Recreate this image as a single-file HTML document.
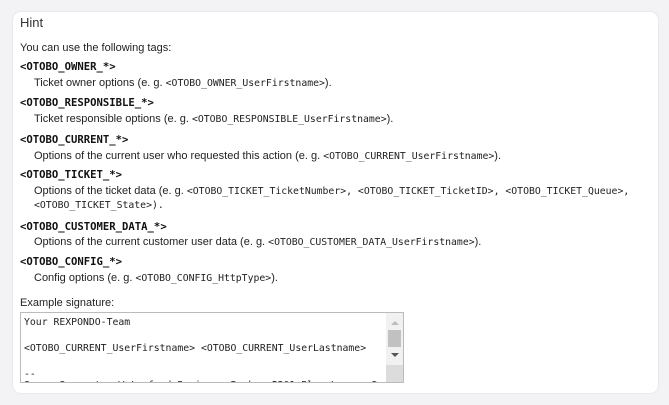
<!DOCTYPE html>
<html><head><style>
body{margin:0;width:669px;height:405px;background:#f3f3f5;font-family:"Liberation Sans",Arial,sans-serif;color:#222;overflow:hidden;position:relative}
.panel{position:absolute;left:13px;top:12px;width:645px;height:381px;background:#fff;border-radius:8px;box-shadow:0 0 2px rgba(0,0,0,.12)}
.t{position:absolute;white-space:nowrap;font-size:11px;line-height:13px}
.m{font-family:"DejaVu Sans Mono","Liberation Mono",monospace;font-size:9.8px}
.h{font-family:"DejaVu Sans Mono","Liberation Mono",monospace;font-size:10.6px;font-weight:bold;color:#111}
.ta{position:absolute;left:20px;top:312px;width:382px;height:69px;border:1px solid #bbb;background:#fff;overflow:hidden}
.sb{position:absolute;right:0;top:0;width:17px;height:69px;background:#f1f1f1}
</style></head><body>
<div class="panel"></div>
<div class="t" style="left:20px;top:15px;font-size:13px;line-height:15px;color:#333">Hint</div>
<div class="t" style="left:20px;top:42px">You can use the following tags:</div>
<div class="t h" style="left:20px;top:61px">&lt;OTOBO_OWNER_*&gt;</div>
<div class="t" style="left:34px;top:77px">Ticket owner options (e. g. <span class="m">&lt;OTOBO_OWNER_UserFirstname&gt;</span>).</div>
<div class="t h" style="left:20px;top:97px">&lt;OTOBO_RESPONSIBLE_*&gt;</div>
<div class="t" style="left:34px;top:113px">Ticket responsible options (e. g. <span class="m">&lt;OTOBO_RESPONSIBLE_UserFirstname&gt;</span>).</div>
<div class="t h" style="left:20px;top:134px">&lt;OTOBO_CURRENT_*&gt;</div>
<div class="t" style="left:34px;top:150px">Options of the current user who requested this action (e. g. <span class="m">&lt;OTOBO_CURRENT_UserFirstname&gt;</span>).</div>
<div class="t h" style="left:20px;top:169px">&lt;OTOBO_TICKET_*&gt;</div>
<div class="t" style="left:34px;top:185px">Options of the ticket data (e. g. <span class="m">&lt;OTOBO_TICKET_TicketNumber&gt;, &lt;OTOBO_TICKET_TicketID&gt;, &lt;OTOBO_TICKET_Queue&gt;,</span></div>
<div class="t m" style="left:34px;top:199px">&lt;OTOBO_TICKET_State&gt;).</div>
<div class="t h" style="left:20px;top:221px">&lt;OTOBO_CUSTOMER_DATA_*&gt;</div>
<div class="t" style="left:34px;top:236px">Options of the current customer user data (e. g. <span class="m">&lt;OTOBO_CUSTOMER_DATA_UserFirstname&gt;</span>).</div>
<div class="t h" style="left:20px;top:256px">&lt;OTOBO_CONFIG_*&gt;</div>
<div class="t" style="left:34px;top:272px">Config options (e. g. <span class="m">&lt;OTOBO_CONFIG_HttpType&gt;</span>).</div>
<div class="t" style="left:20px;top:297px">Example signature:</div>
<div class="ta">
<div class="t m" style="left:3px;top:3px">Your REXPONDO-Team</div>
<div class="t m" style="left:3px;top:29px">&lt;OTOBO_CURRENT_UserFirstname&gt; &lt;OTOBO_CURRENT_UserLastname&gt;</div>
<div class="t m" style="left:3px;top:55px">--</div>
<div class="t m" style="left:3px;top:66px">Super Support - Waterford Business Park - 5201 Blue Lagoon Drive</div>
<div class="sb">
<div style="position:absolute;left:5px;top:8px;width:0;height:0;border-left:4px solid transparent;border-right:4px solid transparent;border-bottom:4px solid #bbb"></div>
<div style="position:absolute;left:2px;top:17px;width:13px;height:17px;background:#c1c1c1"></div>
<div style="position:absolute;left:5px;top:40px;width:0;height:0;border-left:4px solid transparent;border-right:4px solid transparent;border-top:4px solid #555"></div>
<div style="position:absolute;left:0;top:52px;width:17px;height:17px;background:#dcdcdc"></div>
</div>
</div>
</body></html>
